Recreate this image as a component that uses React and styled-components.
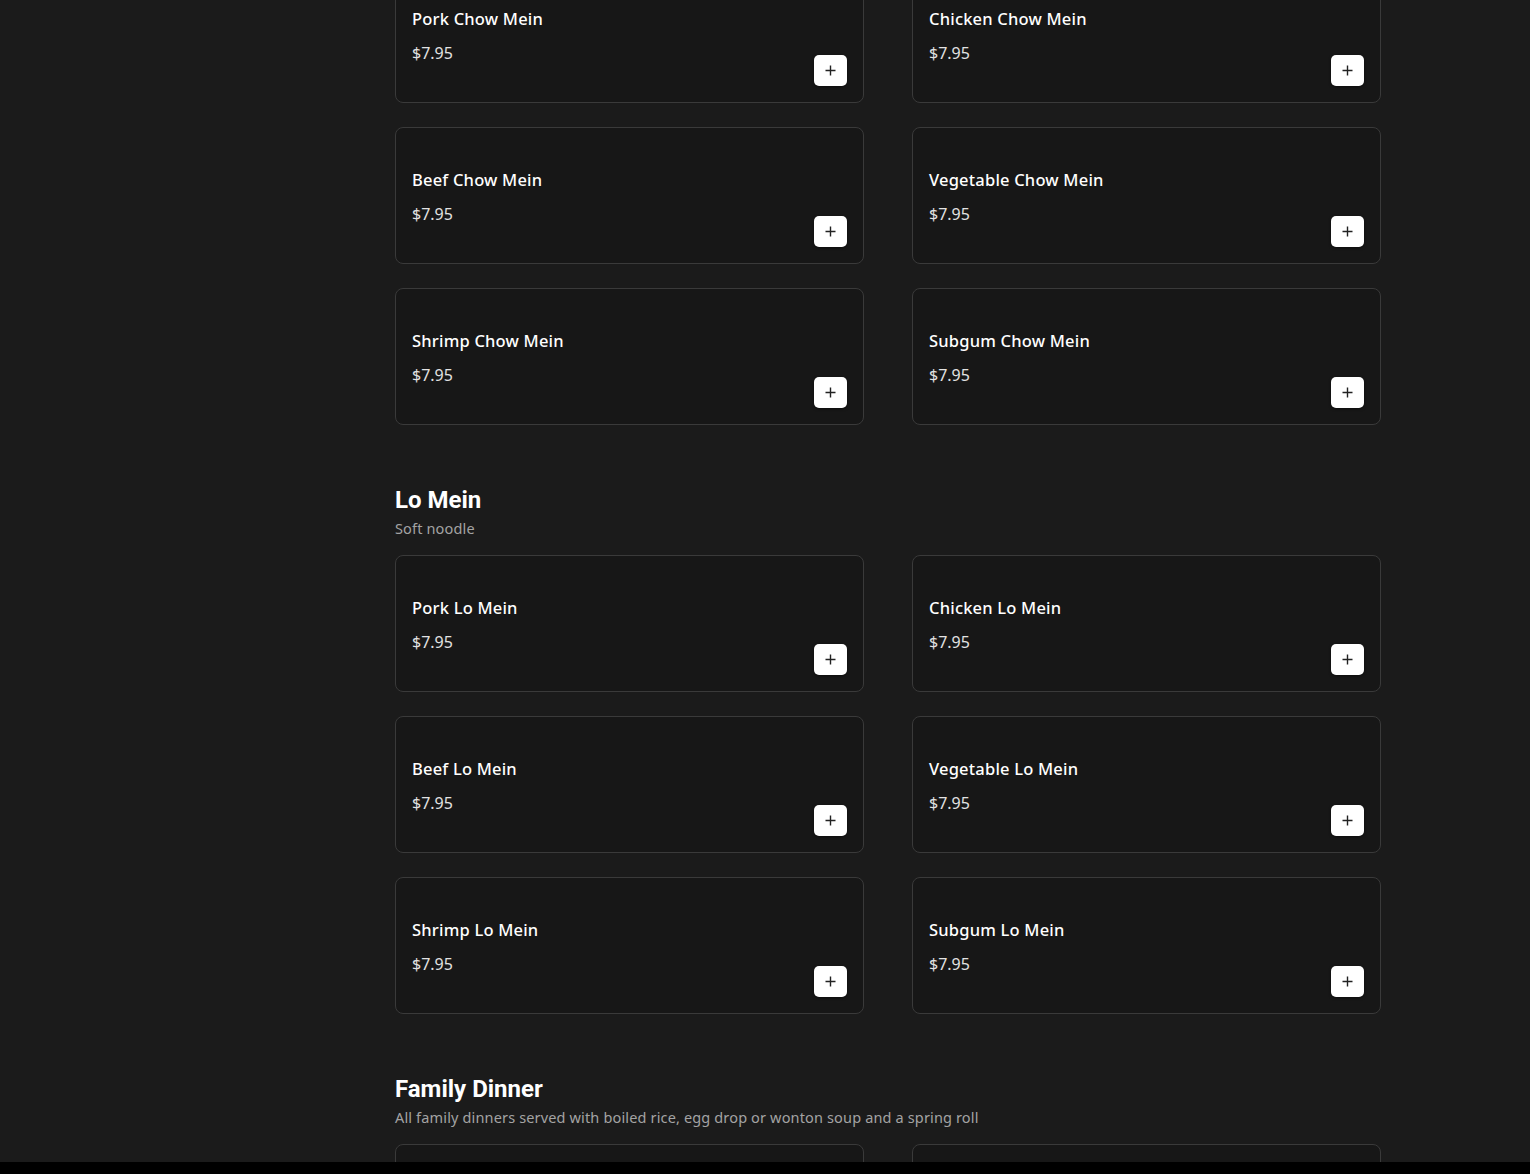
import React from "react";
import styled, { createGlobalStyle } from "styled-components";

const sections = [
  {
    id: "chow-mein",
    title: "Chow Mein",
    note: "Crispy noodle",
    items: [
      "Pork Chow Mein",
      "Chicken Chow Mein",
      "Beef Chow Mein",
      "Vegetable Chow Mein",
      "Shrimp Chow Mein",
      "Subgum Chow Mein",
    ],
  },
  {
    id: "lo-mein",
    title: "Lo Mein",
    note: "Soft noodle",
    items: [
      "Pork Lo Mein",
      "Chicken Lo Mein",
      "Beef Lo Mein",
      "Vegetable Lo Mein",
      "Shrimp Lo Mein",
      "Subgum Lo Mein",
    ],
  },
  {
    id: "family",
    title: "Family Dinner",
    note: "All family dinners served with boiled rice, egg drop or wonton soup and a spring roll",
    items: ["Dinner for Two", "Dinner for Three"],
  },
];

const GlobalStyle = createGlobalStyle`
  html, body {
    margin: 0;
    padding: 0;
    background: #1b1b1b;
    overflow: hidden;
  }
  body {
    font-family: "Noto Sans", "Open Sans", sans-serif;
    color: #fff;
  }
`;

// ****layout****
const Page = styled.div`
  display: grid;
  grid-template-columns: 395px 986px;
  height: 100vh;
  overflow: hidden;
  background: #1b1b1b;
`;

const Aside = styled.aside``;

const Main = styled.main`
  display: flex;
  flex-direction: column;
  gap: 61px;
  /* page is scrolled down: the chow mein header sits above the fold */
  margin-top: ${(p) => p.$scroll}px;
`;

const Section = styled.section`
  display: flex;
  flex-direction: column;
`;

const SectionTitle = styled.h2`
  margin: 0 0 4px;
  font-family: Roboto, "Liberation Sans", sans-serif;
  font-weight: 700;
  font-size: 24px;
  line-height: 28px;
  color: #fff;
`;

const SectionNote = styled.p`
  margin: 0 0 17px;
  font-size: 14.5px;
  line-height: 20px;
  letter-spacing: 0.15px;
  color: #a3a3a3;
`;

const Grid = styled.div`
  display: grid;
  grid-template-columns: 1fr 1fr;
  column-gap: 48px;
  row-gap: 24px;
`;

// ****card****
const Card = styled.div`
  box-sizing: border-box;
  height: 137px;
  padding: 40px 16px 16px 16px;
  display: flex;
  justify-content: space-between;
  background: #171717;
  border: 1px solid #3a3a3a;
  border-radius: 8px;
`;

const Info = styled.div`
  display: flex;
  flex-direction: column;
  gap: 11px;
`;

const Name = styled.h3`
  margin: 0;
  font-size: 16.5px;
  font-weight: 500;
  line-height: 24px;
  letter-spacing: 0.2px;
  color: #fff;
`;

const Price = styled.span`
  font-size: 16px;
  line-height: 22px;
  color: #e2e2e2;
`;

const AddButton = styled.button`
  align-self: flex-end;
  width: 33px;
  height: 31px;
  padding: 0;
  border: none;
  border-radius: 5px;
  background: #fff;
  color: #222;
  display: flex;
  align-items: center;
  justify-content: center;
  cursor: pointer;
  box-shadow: 0 1px 3px rgba(0, 0, 0, 0.5);
`;

const BottomBar = styled.div`
  position: fixed;
  left: 0;
  right: 0;
  bottom: 0;
  height: 12px;
  background: #000;
`;

const PlusIcon = () => (
  <svg width="11" height="11" viewBox="0 0 11 11">
    <path d="M5.5 0.5v10M0.5 5.5h10" stroke="currentColor" strokeWidth="1.4" />
  </svg>
);

const MenuCard = ({ name, price }) => (
  <Card>
    <Info>
      <Name>{name}</Name>
      <Price>{price}</Price>
    </Info>
    <AddButton aria-label={`Add ${name}`}>
      <PlusIcon />
    </AddButton>
  </Card>
);

const App = () => {
  return (
    <>
      <GlobalStyle />
      <Page>
        <Aside />
        <Main $scroll={-34}>
          {sections.map((s, i) => (
            <Section key={s.id}>
              {i > 0 && (
                <>
                  <SectionTitle>{s.title}</SectionTitle>
                  <SectionNote>{s.note}</SectionNote>
                </>
              )}
              <Grid>
                {s.items.map((item) => (
                  <MenuCard key={item} name={item} price="$7.95" />
                ))}
              </Grid>
            </Section>
          ))}
        </Main>
      </Page>
      <BottomBar />
    </>
  );
};

export default App;
